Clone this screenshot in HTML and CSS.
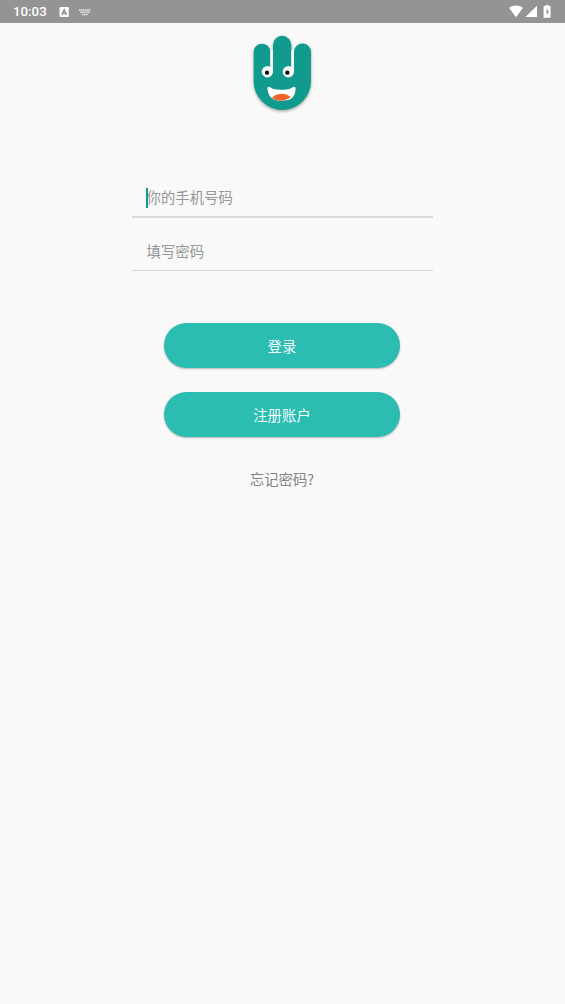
FILE: index.html
```html
<!DOCTYPE html>
<html lang="zh-CN">
<head>
<meta charset="utf-8">
<title>登录</title>
<link rel="stylesheet" href="styles.css">
</head>
<body>
<header class="status">
  <span class="clock">10:03</span>
  <svg class="badge" width="10" height="11" viewBox="0 0 10 11"><rect x=".5" width="9.300" height="10" rx="1" fill="#fff"/><path d="M2.800 8 5.200 2.800 7.600 8M3.700 6.400h3" fill="none" stroke="#888" stroke-width="1.400"/></svg>
  <svg class="keys" width="12" height="7" viewBox="0 0 12 7"><path d="M0 1h12M1 3.200h10M3 5.500h6" fill="none" stroke="#e4e4e4" stroke-width="1.500" stroke-dasharray="1.600 .4"/></svg>
  <span class="spacer"></span>
  <svg class="signals" width="44" height="14" viewBox="0 0 44 14"><path fill="#fff" d="M0 2.800Q7-2 14 2.800L7 12.200ZM28 .8V12H16.300Z"/><path fill="#fff" d="M36.700 0h3v1h1.800v11.800H34.600V1h2.100Z"/><path fill="#8f8f8f" d="M38.700 3 36.700 7.300h1.200v3.200l2-4.300h-1.200Z"/></svg>
</header>
<main class="login">
  <svg class="logo" width="84" height="90" viewBox="0 0 252 270">
    <path class="hand" d="M41 72A25 25 0 0 1 91 72V116H99V51A27.500 27.500 0 0 1 154 51V116H162V72A25.500 25.500 0 0 1 213 72V160A86 86 0 0 1 41 160Z"/>
    <path fill="#f9f9f9" d="M91 66H99V131A17 17 0 1 1 91 117ZM154 66H162V131A17 17 0 1 1 154 117Z"/>
    <circle cx="81" cy="134" r="6.500" fill="#111"/><circle cx="142" cy="134" r="6.500" fill="#111"/>
    <path fill="#fff" d="M82 181Q82 175 90 177Q99 186 125 185Q150 186 158 177Q167 174 167 182Q166 210 144 216Q124 221 105 216Q84 209 82 181Z"/>
    <path fill="#f0652f" d="M96 209Q104 198 125 197Q145 198 152 208Q142 217 124 218Q106 218 96 209Z"/>
  </svg>
  <form class="fields">
    <label class="field focused"><span class="hint">你的手机号码</span></label>
    <label class="field"><span class="hint">填写密码</span></label>
  </form>
  <div class="actions">
    <button class="button" type="button">登录</button>
    <button class="button" type="button">注册账户</button>
  </div>
  <a class="forgot">忘记密码?</a>
</main>
</body>
</html>
```
FILE: styles.css
```css
* { box-sizing: border-box; }
body {
  margin: 0;
  min-height: 1004px;
  background: #f9f9f9;
  font-family: "Noto Sans CJK SC", sans-serif;
  font-size: 14.4px;
  font-weight: 400;
}
.status {
  display: flex;
  align-items: center;
  height: 23px;
  padding: 0 12px 0 13px;
  background: #949494;
  color: #fff;
}
.clock {
  width: 46px;
  font: 500 13.3px/23px Roboto, sans-serif;
}
.badge { margin-top: 1px; }
.keys { margin: 1px 0 0 10px; }
.spacer { flex: 1; }
.signals { margin: 0; }
.login {
  display: flex;
  flex-direction: column;
  align-items: center;
  padding-top: 5px;
}
.logo { display: block; margin-right: 1px; overflow: visible; }
.hand {
  fill: #119b8f;
  filter: drop-shadow(0 4px 4px rgba(0, 0, 0, .35));
}
.fields { width: 301px; margin-top: 61px; }
.field {
  display: flex;
  align-items: center;
  position: relative;
  height: 53px;
  padding: 14px 14.5px 0;
  border-bottom: 1px solid #d3d3d3;
  color: #969696;
}
.focused {
  height: 39px;
  padding-top: 0;
  border-bottom: 2px solid #dcdcdc;
}
.focused::before {
  content: "";
  position: absolute;
  left: 14px;
  top: 9px;
  width: 2px;
  height: 20px;
  background: #119b86;
}
.hint { line-height: 20px; }
.focused .hint { margin-bottom: 1px; }
.actions {
  display: flex;
  flex-direction: column;
  gap: 24px;
  width: 236px;
  margin: 52px 1px 0 0;
}
.button {
  height: 45px;
  padding: 0;
  border: 0;
  border-radius: 23px;
  background: #2bbcb2;
  color: #f0fbfa;
  font: inherit;
  box-shadow: 0 1px 2px rgba(0, 0, 0, .28);
}
.forgot {
  margin: 32px 1px 0 0;
  line-height: 20px;
  color: #858585;
}
```
